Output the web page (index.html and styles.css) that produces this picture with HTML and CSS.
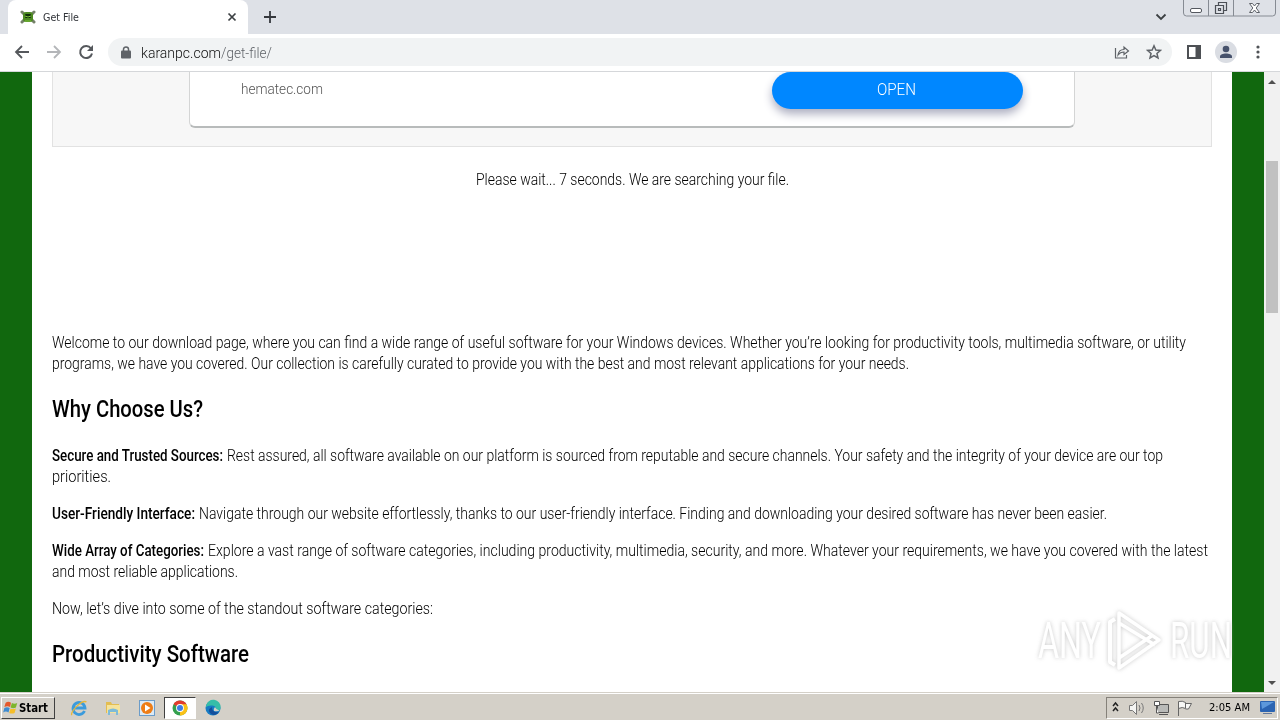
FILE: index.html
```
<!DOCTYPE html>
<html lang="en">
<head>
<meta charset="utf-8">
<title>Get File</title>
<link rel="stylesheet" href="styles.css">
</head>
<body>
<header class="tabs">
  <div class="tab">
    <svg class="favicon" width="16" height="16" viewBox="0 0 16 16"><path d="M2 3l3 3M14 3l-3 3M2 13l3-3M14 13l-3-3" stroke="#75816a" stroke-width="3" stroke-linecap="round"/><rect x="3" y="3" width="10" height="10" rx="3" fill="#4d8a22"/><rect x="5" y="5" width="6" height="4" rx="1" fill="#102f0a"/><path d="M5 7l3 1 3-1M5 12h6" stroke="#7fc23c" fill="none"/></svg>
    <span class="fit tab-title" data-w="36">Get File</span>
    <svg class="tab-close" width="10" height="10" viewBox="0 0 10 10"><path d="M1.500 1.500l7 7M8.500 1.500l-7 7" stroke="#3c4043" stroke-width="1.700"/></svg>
  </div>
  <svg class="plus" width="12" height="12" viewBox="0 0 12 12"><path d="M6 0v12M0 6h12" stroke="#35383d" stroke-width="1.800"/></svg>
  <svg class="chev" width="12" height="8" viewBox="0 0 12 8"><path d="M1.500 1.500L6 6l4.500-4.500" fill="none" stroke="#3c4043" stroke-width="1.800"/></svg>
  <svg class="winctl" width="94" height="18" viewBox="0 0 94 18" fill="none"><path d="M.5 0v13q0 3 3 3h86q3 0 3-3V0M25.500 0v16M50.500 0v16" stroke="#868b93"/><rect x="7.500" y="8.500" width="11" height="4" rx="1.500" fill="#fff" stroke="#54585f"/><path d="M35.500 5.500v-3h8v8h-3M32.500 5.500h8v8h-8zM35.500 8.500h2v2h-2z" stroke="#4c5057" stroke-width="1.200"/><path d="M66.500 3.500h3l2 2.500 2-2.500h3l-3.300 4.500 3.300 4.500h-3l-2-2.500-2 2.500h-3L69.800 8z" fill="#fff" stroke="#5d6168"/></svg>
</header>
<nav class="toolbar">
  <svg class="navicons" width="84" height="16" viewBox="0 0 84 16" fill="none" stroke-width="1.800"><path d="M15 8H2M8 2L2 8l6 6" stroke="#55585c"/><path d="M33 8h13M40 2l6 6-6 6" stroke="#b4b6b9"/><path d="M77 4.500A6 6 0 1 0 78 9.500" stroke="#55585c" stroke-width="2"/><path d="M79 1v6h-6z" fill="#55585c"/></svg>
  <div class="omni">
    <svg width="10" height="13" viewBox="0 0 10 13"><rect y="4.500" width="10" height="8" rx="1" fill="#5f6368"/><path d="M2.500 5V3.300a2.500 2.300 0 0 1 5 0V5" fill="none" stroke="#5f6368" stroke-width="1.500"/></svg>
    <span class="url"><span class="fit" data-w="80">karanpc.com</span><span class="fit path" data-w="51">/get-file/</span></span>
    <svg class="share" width="16" height="14" viewBox="0 0 16 14" fill="none" stroke="#5f6368" stroke-width="1.200"><path d="M1.500 3v10h11v-3"/><path d="M4 10c.5-4 3-5.500 6-5.500V2l4.500 4L10 9.500V7C7.500 7 5.500 8 4 10z"/></svg>
    <svg class="star" width="16" height="16" viewBox="0 0 16 16"><path d="M8 1.800l1.850 4.200 4.550.4-3.450 3 1.050 4.500L8 11.500l-4 2.400L5.050 9.400l-3.450-3L6.150 6z" fill="none" stroke="#5f6368" stroke-width="1.500"/></svg>
  </div>
  <svg class="panel" width="14" height="14" viewBox="0 0 14 14"><rect x="1" y="1" width="12" height="12" fill="none" stroke="#4d5054" stroke-width="2"/><path d="M8.500 0H14v14H8.500z" fill="#4d5054"/></svg>
  <svg class="avatar" width="22" height="22" viewBox="0 0 22 22"><circle cx="11" cy="11" r="11" fill="#dadde3"/><circle cx="11" cy="8" r="3.300" fill="#47526c"/><path d="M5 17v-1.500c0-4 12-4 12 0V17z" fill="#47526c"/></svg>
  <svg class="dots" width="4" height="14" viewBox="0 0 4 14" fill="#505357"><circle cx="2" cy="2" r="1.600"/><circle cx="2" cy="7" r="1.600"/><circle cx="2" cy="12" r="1.600"/></svg>
</nav>
<div class="view">
  <main class="page">
    <section class="ad">
      <div class="card"><span class="fit domain" data-w="82">hematec.com</span><div class="open"><span class="fit" data-w="39">OPEN</span></div></div>
    </section>
    <div class="wait"><span class="fit" data-w="313">Please wait... 7 seconds. We are searching your file.</span></div>
    <article>
      <p><span class="fit" data-w="1134">Welcome to our download page, where you can find a wide range of useful software for your Windows devices. Whether you’re looking for productivity tools, multimedia software, or utility</span><br><span class="fit" data-w="857">programs, we have you covered. Our collection is carefully curated to provide you with the best and most relevant applications for your needs.</span></p>
      <h2><span class="fit" data-w="151">Why Choose Us?</span></h2>
      <p><b class="fit label" data-w="171">Secure and Trusted Sources:</b><span class="fit" data-w="936">Rest assured, all software available on our platform is sourced from reputable and secure channels. Your safety and the integrity of your device are our top</span><br><span class="fit" data-w="59">priorities.</span></p>
      <p><b class="fit label" data-w="143">User-Friendly Interface:</b><span class="fit" data-w="908">Navigate through our website effortlessly, thanks to our user-friendly interface. Finding and downloading your desired software has never been easier.</span></p>
      <p><b class="fit label" data-w="152">Wide Array of Categories:</b><span class="fit" data-w="1000">Explore a vast range of software categories, including productivity, multimedia, security, and more. Whatever your requirements, we have you covered with the latest</span><br><span class="fit" data-w="186">and most reliable applications.</span></p>
      <p><span class="fit" data-w="381">Now, let’s dive into some of the standout software categories:</span></p>
      <h2><span class="fit" data-w="197">Productivity Software</span></h2>
    </article>
  </main>
  <aside class="scroll"><i class="up"></i><div class="thumb"></div><i class="down"></i></aside>
  <div class="mark">
    <span class="fit" data-w="63">ANY</span>
    <svg width="56" height="64" viewBox="0 0 56 64" fill="none" stroke="#fff" stroke-width="4" stroke-linejoin="round"><path d="M8 10l-5 3v40l5 3"/><path d="M12 4l40 27-40 28zM12 14l36 22M12 49l34-23" stroke-width="3.500"/></svg>
    <span class="fit" data-w="62">RUN</span>
  </div>
</div>
<footer class="taskbar">
  <div class="start"><svg width="16" height="16" viewBox="0 0 18 16"><path d="M3 2q3-2 6 0L8 7Q5 5 1.500 7z" fill="#e4582b"/><path d="M10 2.500q3 1.500 6 0L14.500 7.500q-3 1.500-6 0z" fill="#7db52c"/><path d="M1.500 8q3-1.500 6 0l-1.300 5q-3-2-6 0z" fill="#3d8bd0"/><path d="M8.500 8.500q3 1.500 6 0L13 13.500q-3 1.500-6 0z" fill="#f5bd28"/></svg><b class="fit" data-w="29">Start</b></div>
  <div class="apps">
    <svg width="18" height="18" viewBox="0 0 18 18" fill="none"><path d="M14.500 12A6 6 0 1 1 15 9H4" stroke="#3b9bdc" stroke-width="2.800"/><path d="M2 16C-1 14 12 0 16.500 3" stroke="#e5b73a" stroke-width="1.300"/></svg>
    <svg width="18" height="18" viewBox="0 0 18 18"><path d="M2 3h5l1 2h7v9H2z" fill="#e3bd51"/><path d="M3 6h13v8H3z" fill="#f6e39b"/><path d="M4 16v-5q5-3 10 0v5h-2v-3H6v3z" fill="#7ebbd8"/></svg>
    <svg width="18" height="18" viewBox="0 0 18 18"><rect x="1.500" y="1.500" width="15" height="15" fill="#dceaf5" stroke="#6b9cc9"/><circle cx="9" cy="9" r="6" fill="#ee7d16"/><path d="M7 5.500l5.500 3.500L7 12.500z" fill="#fff"/></svg>
    <div class="active"><svg width="16" height="16" viewBox="0 0 16 16"><circle cx="8" cy="8" r="7.500" fill="#34a04e"/><path d="M8 8L1.500 4.200A7.500 7.500 0 0 1 14.500 4.200z" fill="#e33b2e"/><path d="M8 8V4.200h6.500A7.500 7.500 0 0 1 8 15.500z" fill="#fbc116"/><circle cx="8" cy="8" r="3.900" fill="#fff"/><circle cx="8" cy="8" r="3" fill="#3d7de5"/></svg></div>
    <svg width="18" height="18" viewBox="0 0 18 18"><circle cx="9" cy="9" r="7.500" fill="#167bc3"/><path d="M2 7A7.300 7.300 0 0 1 16.500 9q0 3-4.500 3 1-5-3.500-5.500T2 8z" fill="#36bda8"/><path d="M8 8q-1 5 7 5.500Q10 18 6 14 3 10 8 8z" fill="#134f9c"/><path d="M10 12q-1-2 1-4 2 4 5 3-2 2-6 1z" fill="#d4d0c8"/></svg>
  </div>
  <div class="tray">
    <svg width="92" height="18" viewBox="0 0 92 18" fill="none"><path d="M6 7l2.500-3L11 7M6 12l2.500-3 2.500 3" stroke="#222" stroke-width="1.500"/><path d="M22.500 6.500h3l4-4v13l-4-4h-3z" fill="#f4f4f2" stroke="#777"/><path d="M32 6q2 3 0 6M34.500 4q3.500 5 0 10" stroke="#777"/><path d="M50.500 5.500h11v8h-11zM52 15.500h9" fill="#b9bab8" stroke="#555"/><path d="M47.500 2.500h5v4h-5zM49.500 7v7h2" fill="#fff" stroke="#555"/><path d="M71.500 17V2.500q4-1 7 1v6q-3-2-7 0M78.500 4.500h6l-3 5.500h-3" fill="#f7f7f5" stroke="#666"/></svg>
    <span class="fit clock" data-w="41">2:05 AM</span>
    <svg class="desk" width="17" height="15" viewBox="0 0 17 15"><rect x="1" y="1" width="15" height="11" rx="1" fill="#2b64b2"/><path d="M2 2h13L3 9z" fill="#5d98db"/><path d="M4 13.500h9" stroke="#63799c"/></svg>
  </div>
</footer>
<script src="fit.js"></script>
</body>
</html>
```
FILE: styles.css
```
* { box-sizing: border-box; }
body { margin: 0; width: 1280px; height: 720px; overflow: hidden; display: flex; flex-direction: column; background: #fff; font-family: Roboto, "Liberation Sans", sans-serif; color: #000; }
svg { display: block; flex: none; }
.fit { display: inline-block; flex: none; white-space: nowrap; transform-origin: 0 50%; }
.tabs { height: 34px; flex: none; background: #dee1e7; display: flex; align-items: flex-start; padding-left: 8px; }
.tab { width: 240px; height: 34px; background: #fff; border-radius: 8px 8px 0 0; display: flex; align-items: center; padding: 0 11px 0 12px; }
.tab-title { font: 11px "DejaVu Sans", sans-serif; color: #303338; margin-left: 7px; }
.tab-close { margin-left: auto; }
.plus { margin: 11px 0 0 16px; }
.chev { margin: 13px 16px 0 auto; }
.winctl { margin-right: 3px; }
.toolbar { height: 38px; flex: none; border-bottom: 1px solid #d5d7da; display: flex; align-items: center; padding: 0 20px 1px 14px; }
.omni { width: 1064px; height: 28px; margin-left: 10px; border-radius: 14px; background: #f1f3f4; display: flex; align-items: center; padding: 0 10px 0 13px; }
.url { display: flex; font-size: 15px; font-weight: 300; color: #111; margin-left: 10px; padding-top: 1px; }
.path { color: #5f6368; }
.share { margin-left: auto; }
.star { margin-left: 16px; }
.panel { margin-left: 15px; }
.avatar { margin-left: 14px; }
.dots { margin-left: auto; }
.view { height: 620px; flex: none; display: flex; background: #11680e; padding-left: 32px; position: relative; }
.page { width: 1200px; height: 620px; overflow: hidden; background: #fff; padding: 0 20px; }
.ad { height: 75px; background: #f7f7f7; border: 1px solid #e2e2e2; border-top: 0; display: flex; justify-content: center; align-items: flex-start; }
.card { width: 886px; height: 56px; background: #fff; border: 1px solid #d4d5d5; border-top: 0; border-bottom: 2px solid #b8bbbb; border-radius: 0 0 6px 6px; display: flex; align-items: flex-start; justify-content: space-between; padding: 0 51px; }
.domain { font-size: 14px; line-height: 18px; margin-top: 8px; font-weight: 300; color: #555; }
.open { width: 251px; height: 37px; border-radius: 19px; background: #0087ff; color: #fff; display: flex; align-items: center; justify-content: center; box-shadow: 0 5px 10px #acaec0; clip-path: inset(0 -20px -20px -20px); font-size: 16px; font-weight: 300; padding: 0 2px 2px 0; }
.wait { height: 21px; margin-top: 22px; text-align: center; font-size: 16px; line-height: 21px; font-weight: 300; }
article { margin-top: 142px; font-size: 16px; font-weight: 300; line-height: 21px; white-space: nowrap; }
p { margin: 0 0 16px; }
p .fit { vertical-align: top; }
.label { margin-right: 4px; font-weight: 500; }
h2 { margin: 0 0 16px; height: 39px; line-height: 38px; font-size: 24px; font-weight: 500; }
.scroll { width: 16px; height: 620px; margin-left: auto; background: #f1f1f1; display: flex; flex-direction: column; align-items: center; }
.thumb { width: 12px; height: 152px; background: #c1c1c1; margin-top: 77px; }
.up, .down { border: 4px solid transparent; }
.up { margin-top: 4px; border-top: 0; border-bottom-color: #505050; height: 8px; }
.down { margin: auto 0 7px; border-bottom: 0; border-top-color: #505050; height: 4px; }
.mark { position: absolute; left: 1038px; top: 537px; display: flex; align-items: center; color: #fff; font-size: 50px; line-height: 64px; opacity: .8; filter: drop-shadow(0 0 2px #bbb); width: 194px; overflow: hidden; }
.mark svg { margin: 0 7px 0 6px; }
.taskbar { height: 28px; flex: none; background: #d4d0c8; border-top: 1px solid #d4d0c8; box-shadow: inset 0 1px #fff; display: flex; align-items: center; padding: 2px 2px 0 1px; }
.start { width: 54px; height: 22px; border: 1px solid; border-color: #fff #404040 #404040 #fff; display: flex; align-items: center; padding-left: 1px; font: bold 12px "DejaVu Sans", sans-serif; }
.apps { display: flex; align-items: center; margin-left: 15px; gap: 16px; }
.active { width: 32px; height: 22px; background: #fff; border: 1px solid; border-color: #404040 #fff #fff #404040; display: flex; align-items: center; justify-content: center; margin: 0 -8px; }
.tray { width: 172px; height: 22px; margin-left: auto; border: 1px solid; border-color: #858179 #fff #fff #858179; display: flex; align-items: center; }
.clock { font: 11px "DejaVu Sans", sans-serif; margin-left: 10px; }
.desk { margin-left: 9px; }
```
FILE: fit.js
```
// Condense each text run to its column width.
document.querySelectorAll('.fit').forEach(function (el) {
  var w = parseFloat(el.dataset.w);
  var natural = el.getBoundingClientRect().width;
  var gap = parseFloat(getComputedStyle(el).marginRight) || 0;
  el.style.transform = 'scaleX(' + w / natural + ')';
  el.style.marginRight = (w - natural + gap) + 'px';
});
```
